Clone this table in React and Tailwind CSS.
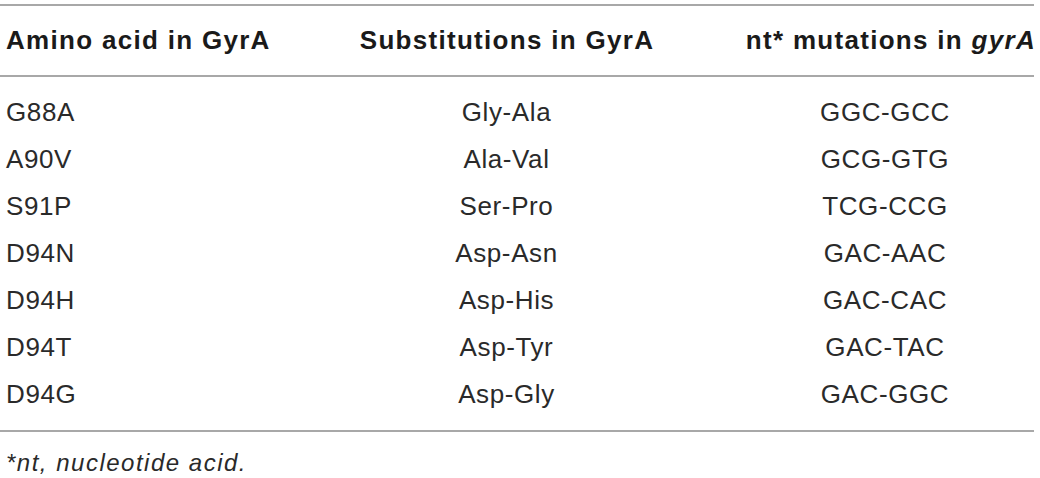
import React from "react";

const rows = [
  ["G88A", "Gly-Ala", "GGC-GCC"],
  ["A90V", "Ala-Val", "GCG-GTG"],
  ["S91P", "Ser-Pro", "TCG-CCG"],
  ["D94N", "Asp-Asn", "GAC-AAC"],
  ["D94H", "Asp-His", "GAC-CAC"],
  ["D94T", "Asp-Tyr", "GAC-TAC"],
  ["D94G", "Asp-Gly", "GAC-GGC"],
];

const App = () => {
  return (
    <div
      className="w-[1040px] h-[478px] bg-white text-[#222] pt-[4px] pr-[6px]"
      style={{ fontFamily: '"Liberation Sans", Arial, sans-serif' }}
    >
      {/* Table */}
      <div className="border-t-2 border-b-2 border-[#a8a8a8]">
        {/* Header */}
        <div className="grid grid-cols-[312px_1fr_300px] items-center h-[71px] border-b-2 border-[#a8a8a8] text-[26px] font-bold tracking-[1.3px] text-[#1a1a1a]">
          <div className="pl-[6px]">Amino acid in GyrA</div>
          <div className="text-center pr-[32px]">Substitutions in GyrA</div>
          <div className="text-right -mr-[2px] whitespace-nowrap">
            nt* mutations in <span className="italic">gyrA</span>
          </div>
        </div>

        {/* Body */}
        <div className="py-[12px] text-[26px] tracking-[0.6px] text-[#2a2a2a]">
          {rows.map((r) => (
            <div
              key={r[0]}
              className="grid grid-cols-[312px_1fr_300px] items-center h-[47px]"
            >
              <div className="pl-[6px]">{r[0]}</div>
              <div className="text-center pr-[33px]">{r[1]}</div>
              <div className="text-center pl-[2px]">{r[2]}</div>
            </div>
          ))}
        </div>
      </div>

      {/* Footnote */}
      <p className="pl-[6px] pt-[13px] text-[24px] italic tracking-[1.5px] text-[#2a2a2a]">
        *nt, nucleotide acid.
      </p>
    </div>
  );
};

export default App;
